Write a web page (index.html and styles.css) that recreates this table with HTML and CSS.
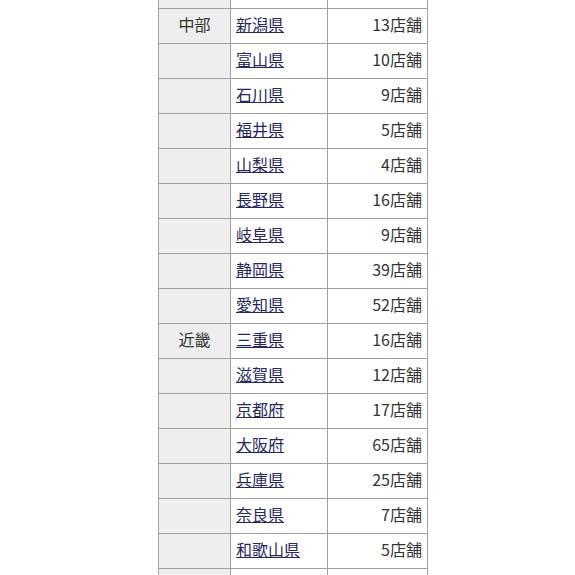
FILE: index.html
```html
<!DOCTYPE html>
<html lang="ja">
<head>
<meta charset="utf-8">
<link rel="stylesheet" href="styles.css">
</head>
<body>
<div class="wrap">
<table class="stores">
  <colgroup><col class="c-area"><col class="c-pref"><col class="c-num"></colgroup>
  <tbody>
    <tr><td class="area"></td><td class="pref"></td><td class="num"></td></tr>
    <tr><td class="area">中部</td><td class="pref"><a href="#">新潟県</a></td><td class="num">13店舗</td></tr>
    <tr><td class="area"></td><td class="pref"><a href="#">富山県</a></td><td class="num">10店舗</td></tr>
    <tr><td class="area"></td><td class="pref"><a href="#">石川県</a></td><td class="num">9店舗</td></tr>
    <tr><td class="area"></td><td class="pref"><a href="#">福井県</a></td><td class="num">5店舗</td></tr>
    <tr><td class="area"></td><td class="pref"><a href="#">山梨県</a></td><td class="num">4店舗</td></tr>
    <tr><td class="area"></td><td class="pref"><a href="#">長野県</a></td><td class="num">16店舗</td></tr>
    <tr><td class="area"></td><td class="pref"><a href="#">岐阜県</a></td><td class="num">9店舗</td></tr>
    <tr><td class="area"></td><td class="pref"><a href="#">静岡県</a></td><td class="num">39店舗</td></tr>
    <tr><td class="area"></td><td class="pref"><a href="#">愛知県</a></td><td class="num">52店舗</td></tr>
    <tr><td class="area">近畿</td><td class="pref"><a href="#">三重県</a></td><td class="num">16店舗</td></tr>
    <tr><td class="area"></td><td class="pref"><a href="#">滋賀県</a></td><td class="num">12店舗</td></tr>
    <tr><td class="area"></td><td class="pref"><a href="#">京都府</a></td><td class="num">17店舗</td></tr>
    <tr><td class="area"></td><td class="pref"><a href="#">大阪府</a></td><td class="num">65店舗</td></tr>
    <tr><td class="area"></td><td class="pref"><a href="#">兵庫県</a></td><td class="num">25店舗</td></tr>
    <tr><td class="area"></td><td class="pref"><a href="#">奈良県</a></td><td class="num">7店舗</td></tr>
    <tr><td class="area"></td><td class="pref"><a href="#">和歌山県</a></td><td class="num">5店舗</td></tr>
    <tr><td class="area"></td><td class="pref"></td><td class="num"></td></tr>
  </tbody>
</table>
</div>
</body>
</html>
```

FILE: styles.css
```css
html, body {
  margin: 0;
  padding: 0;
  background: #fff;
  overflow: hidden;
}
body {
  font-family: "Noto Sans CJK JP", "Noto Sans", sans-serif;
  font-size: 16px;
  color: #333;
}
.wrap {
  margin-top: -27px;
  padding-left: 158px;
}
.stores {
  border-collapse: collapse;
  table-layout: fixed;
  width: 270px;
}
.c-area { width: 72px; }
.c-pref { width: 97px; }
.c-num { width: 100px; }
.stores td {
  border: 1px solid #a0a0a0;
  padding: 3px 5px 7px;
  line-height: 24px;
  height: 24px;
  white-space: nowrap;
}
.stores td.area {
  background: #eee;
  text-align: center;
}
.stores td.num {
  text-align: right;
}
.stores a {
  color: #27275e;
  text-decoration: underline;
}
```
